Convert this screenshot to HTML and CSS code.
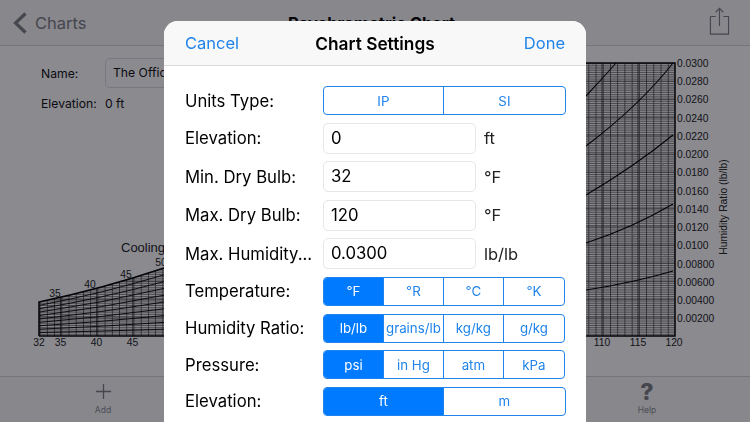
FILE: index.html
```html
<!DOCTYPE html>
<html lang="en">
<head>
<meta charset="utf-8">
<title>Chart Settings</title>
<link rel="stylesheet" href="styles.css">
</head>
<body>
<div class="page">
  <header class="navbar">
    <a class="back">
      <svg class="chevron" viewBox="0 0 14 22"><path d="M12.500 1.500 L2.500 11 L12.500 20.500"/></svg>
      <span>Charts</span>
    </a>
    <h1 class="page-title">Psychrometric Chart</h1>
    <svg class="share" viewBox="0 0 22 30"><path d="M1.500 10 H7 M15 10 H20.500 V28.500 H1.500 V10 M11 20 V1.500 M7 5.500 L11 1.500 L15 5.500"/></svg>
  </header>
  <main class="stage">
    <svg class="chart" viewBox="0 46 750 330">
      <defs>
        <pattern id="fineH" width="10" height="1.82" patternUnits="userSpaceOnUse" y="63">
          <rect width="10" height="0.8" fill="#777"/>
        </pattern>
        <pattern id="fineV" width="7.22" height="10" patternUnits="userSpaceOnUse" x="675">
          <rect width="0.8" height="10" fill="#444"/>
        </pattern>
        <clipPath id="dome"><path d="M39 302 Q101.500 289 164 268 V63 H675 V336 H39 Z"/></clipPath>
      </defs>
      <g clip-path="url(#dome)">
        <rect x="39" y="63" width="636" height="273" fill="url(#fineH)"/>
        <rect x="39" y="63" width="636" height="273" fill="url(#fineV)"/>
        <path class="major" d="M60.600 63V336M96.700 63V336M132.800 63V336M602 63V336M638 63V336"/>
        <path class="grid-h" d="M39 154H675M39 172.200H675M39 190.400H675M39 208.600H675M39 226.800H675M39 245H675M39 263.200H675M39 281.400H675M39 299.600H675M39 317.800H675M39 81.200H675M39 99.400H675M39 117.600H675M39 135.800H675"/>
      </g>
      <path class="wet" d="M586 128 L675 170 M586 205 L675 262 M586 285 L675 330 M590 63 L675 112"/>
      <path class="rh" d="M586 96 Q601 80 616 63 M586 146 Q640 105 673 63 M586 195 Q635 166 673 135 M586 243 Q632 228 673 204 M586 290 Q632 283 673 271"/>
      <path class="rh-left" d="M39 305.400Q101.500 293.700 164 274.800M39 308.800Q101.500 298.400 164 281.600M39 312.200Q101.500 303.100 164 288.400M39 315.600Q101.500 307.800 164 295.200M39 319Q101.500 312.500 164 302M39 322.400Q101.500 317.200 164 308.800M39 325.800Q101.500 321.900 164 315.600M39 329.200Q101.500 326.600 164 322.400M39 332.600Q101.500 331.300 164 329.200"/>
      <path class="frame" d="M39 336 V302 Q101.500 289 164 268 M39 336 H675 V63 H580"/>
      <g class="temp-labels">
        <text x="39" y="346">32</text><text x="60.500" y="346">35</text><text x="96.500" y="346">40</text><text x="132.500" y="346">45</text>
        <text x="602" y="346">110</text><text x="638" y="346">115</text><text x="674" y="346">120</text>
        <text x="55" y="297">35</text><text x="90" y="288">40</text><text x="126" y="278">45</text><text x="161" y="266">50</text>
      </g>
      <text class="cooling" x="121" y="252">Cooling</text>
      <g class="ratio-labels">
        <text x="677" y="67">0.0300</text><text x="677" y="85">0.0280</text><text x="677" y="103">0.0260</text>
        <text x="677" y="122">0.0240</text><text x="677" y="140">0.0220</text><text x="677" y="158">0.0200</text>
        <text x="677" y="176">0.0180</text><text x="677" y="195">0.0160</text><text x="677" y="213">0.0140</text>
        <text x="677" y="231">0.0120</text><text x="677" y="249">0.0100</text><text x="677" y="268">0.00800</text>
        <text x="677" y="286">0.00600</text><text x="677" y="304">0.00400</text><text x="677" y="322">0.00200</text>
      </g>
      <text class="axis-title" transform="translate(727 207) rotate(-90)">Humidity Ratio (lb/lb)</text>
    </svg>
    <div class="meta">
      <div class="meta-row">
        <span class="meta-label">Name:</span>
        <span class="meta-input">The Office</span>
      </div>
      <div class="meta-row">
        <span class="meta-label">Elevation:</span>
        <span>0 ft</span>
      </div>
    </div>
  </main>
  <footer class="tabbar">
    <div class="tab">
      <svg class="tab-icon" viewBox="0 0 18 18"><path d="M9 1 V17 M1 9 H17"/></svg>
      <span>Add</span>
    </div>
    <div class="tab">
      <span class="help-mark">?</span>
      <span>Help</span>
    </div>
  </footer>
</div>
<div class="scrim"></div>
<section class="modal">
  <header class="modal-head">
    <span class="link">Cancel</span>
    <strong class="modal-title">Chart Settings</strong>
    <span class="link">Done</span>
  </header>
  <div class="form">
    <div class="row">
      <label>Units Type:</label>
      <div class="seg wide"><span>IP</span><span>SI</span></div>
    </div>
    <div class="row tall">
      <label>Elevation:</label>
      <div class="field">0</div><span class="unit">ft</span>
    </div>
    <div class="row tall">
      <label>Min. Dry Bulb:</label>
      <div class="field">32</div><span class="unit">°F</span>
    </div>
    <div class="row tall">
      <label>Max. Dry Bulb:</label>
      <div class="field">120</div><span class="unit">°F</span>
    </div>
    <div class="row tall">
      <label>Max. Humidity...</label>
      <div class="field">0.0300</div><span class="unit">lb/lb</span>
    </div>
    <div class="row">
      <label>Temperature:</label>
      <div class="seg"><span class="on">°F</span><span>°R</span><span>°C</span><span>°K</span></div>
    </div>
    <div class="row">
      <label>Humidity Ratio:</label>
      <div class="seg"><span class="on">lb/lb</span><span>grains/lb</span><span>kg/kg</span><span>g/kg</span></div>
    </div>
    <div class="row">
      <label>Pressure:</label>
      <div class="seg"><span class="on">psi</span><span>in Hg</span><span>atm</span><span>kPa</span></div>
    </div>
    <div class="row">
      <label>Elevation:</label>
      <div class="seg wide"><span class="on">ft</span><span>m</span></div>
    </div>
  </div>
</section>
</body>
</html>
```
FILE: styles.css
```css
* { box-sizing: border-box; }
html, body { margin: 0; height: 100%; overflow: hidden; }
body { font-family: Inter, "Liberation Sans", sans-serif; color: #000; background: #fff; }

.page { display: flex; flex-direction: column; height: 422px; }

.navbar { height: 46px; display: grid; grid-template-columns: 1fr auto 1fr; align-items: center; padding: 0 20px 0 13px; border-bottom: 1px solid #d8d8dc; background: #f9f9f9; }
.back { display: flex; align-items: center; gap: 8px; color: #7f7f85; font-size: 16.5px; }
.chevron { width: 14px; height: 22px; fill: none; stroke: #7f7f85; stroke-width: 3.2; }
.page-title { margin: 0; font-size: 16.5px; font-weight: 700; }
.share { width: 21px; height: 28.6px; margin-top: -3px; justify-self: end; fill: none; stroke: #7f7f85; stroke-width: 1.2; }

.stage { flex: 1; display: grid; min-height: 0; }
.chart, .meta { grid-area: 1 / 1; }
.chart { width: 750px; height: 330px; display: block; font-family: "Liberation Sans", sans-serif; }

.frame { fill: none; stroke: #000; stroke-width: 1.5; }
.major { stroke: #222; stroke-width: 0.8; fill: none; }
.grid-h { stroke: #333; stroke-width: 0.5; fill: none; }
.wet { stroke: #aaa; stroke-width: 0.7; stroke-dasharray: 5 4; fill: none; }
.rh { stroke: #000; stroke-width: 1.1; fill: none; }
.rh-left { stroke: #000; stroke-width: 0.9; fill: none; }
.temp-labels text { font-size: 10.3px; text-anchor: middle; fill: #222; }
.ratio-labels text { font-size: 10.3px; fill: #222; }
.cooling { font-size: 13px; fill: #222; }
.axis-title { font-size: 10.3px; text-anchor: middle; fill: #222; }

.meta { display: flex; flex-direction: column; gap: 8px; padding: 12px 0 0 41px; font-size: 12.2px; color: #111; align-self: start; }
.meta-row { display: flex; align-items: center; }
.meta-row:first-child { height: 30px; }
.meta-label { width: 64px; }
.meta-input { width: 200px; height: 30px; line-height: 28px; border: 1px solid #dcdce0; border-radius: 5px; padding-left: 7px; }

.tabbar { height: 46px; display: flex; justify-content: space-between; padding: 0 87px 0 87px; border-top: 1px solid #d8d8dc; background: #f9f9f9; }
.tab { width: 32px; display: flex; flex-direction: column; align-items: center; justify-content: flex-end; padding-bottom: 7px; font-size: 8.5px; color: #8e8e93; }
.tab-icon { width: 17px; height: 17px; margin-bottom: 5px; fill: none; stroke: #7f7f85; stroke-width: 1.4; }
.help-mark { font-size: 23px; line-height: 20px; margin-bottom: 3px; font-weight: 800; color: #7f7f85; }

.scrim { position: fixed; inset: 0; background: rgba(6, 6, 16, 0.47); }

.modal { position: fixed; left: 164px; top: 21px; width: 422px; height: 420px; background: #fff; border-radius: 14px; overflow: hidden; }
.modal-head { height: 45px; display: grid; grid-template-columns: 1fr auto 1fr; align-items: center; padding: 0 21px; background: #f8f8f8; border-bottom: 1px solid #d9d9d9; font-size: 16.5px; }
.link { color: #1f83ea; }
.link:last-child { justify-self: end; }
.modal-title { font-weight: 600; font-size: 17.3px; }

.form { display: flex; flex-direction: column; gap: 7.6px; padding: 20px 0 0 21px; }
.row { display: flex; align-items: center; height: 29px; }
.row.tall { height: 31px; }
.row label { width: 138px; font-size: 16.7px; white-space: nowrap; }

.seg { display: flex; width: 242px; height: 29px; border: 1px solid #1f83ea; border-radius: 4px; overflow: hidden; font-size: 13.3px; color: #1f83ea; }
.seg.wide { width: 243px; }
.seg span { flex: 1 1 0; min-width: 0; display: flex; align-items: center; justify-content: center; border-left: 1px solid #1f83ea; white-space: nowrap; }
.seg span:first-child { border-left: 0; }
.seg span:last-child { flex-grow: 1.02; }
.seg .on { background: #007aff; color: #fff; }

.field { width: 153px; height: 31px; line-height: 29px; border: 1px solid #e6e6e6; border-radius: 5px; padding-left: 7px; font-size: 16.7px; }
.unit { margin-left: 8px; font-size: 16.5px; color: #222; }
```
